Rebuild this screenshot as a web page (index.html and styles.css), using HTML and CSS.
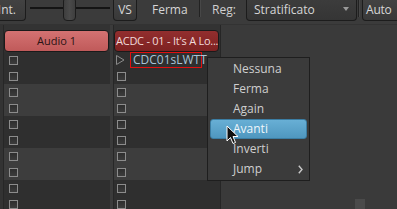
FILE: index.html
```html
<!DOCTYPE html>
<html lang="it">
<head>
    <meta charset="UTF-8">
    <title>Pattern</title>
    <link rel="stylesheet" href="styles.css">
</head>
<body>
    <div class="toolbar">
        <div class="tbtn int">Int.</div>
        <div class="slider">
            <div class="track"></div>
            <div class="handle"></div>
        </div>
        <div class="tbtn vs">VS</div>
        <div class="label ferma">Ferma</div>
        <div class="sep"></div>
        <div class="label reg">Reg:</div>
        <div class="combo">Stratificato<span class="arrow"></span></div>
        <div class="sep"></div>
        <div class="tbtn auto">Auto</div>
    </div>

    <div class="main">
        <div class="column col-a">
            <div class="col-head"><div class="track-btn audio">Audio 1</div></div>
            <div class="rows" id="rows-a"></div>
        </div>
        <div class="col-gap"></div>
        <div class="column col-b">
            <div class="col-head"><div class="track-btn clip">ACDC - 01 - It's A Lo...</div></div>
            <div class="rows" id="rows-b">
                <div class="row dark">
                    <svg class="play" width="9" height="10" viewBox="0 0 9 10"><polygon points="0.5,0.5 8,5 0.5,9.5" fill="none" stroke="#8a8a8a" stroke-width="1"/></svg>
                    <span class="cell-sel">CDC01sLWTT</span>
                </div>
            </div>
        </div>
        <div class="rest">
            <div class="corner"></div>
        </div>
    </div>

    <div class="menu">
        <div class="item">Nessuna</div>
        <div class="item">Ferma</div>
        <div class="item">Again</div>
        <div class="item active">Avanti</div>
        <div class="item">Inverti</div>
        <div class="item">Jump
            <svg class="sub" width="5" height="9" viewBox="0 0 5 9"><path d="M0.8 0.8 L4 4.5 L0.8 8.2" fill="none" stroke="#c8c8c8" stroke-width="1.4"/></svg>
        </div>
    </div>

    <svg class="cursor" width="13" height="20" viewBox="0 0 13 20">
        <path d="M1 1 L1 16 L4.5 12.5 L7 18.5 L9.5 17.5 L7 11.5 L12 11.5 Z" fill="#111" stroke="#fff" stroke-width="1" stroke-linejoin="round"/>
    </svg>

    <script>
        // 10 rows per column, shading switches every 2 rows
        function fillRows(id, start) {
            const box = document.getElementById(id);
            for (let i = start; i < 10; i++) {
                const row = document.createElement('div');
                row.className = 'row ' + (Math.floor(i / 2) % 2 ? 'light' : 'dark');
                row.innerHTML = '<span class="check"></span>';
                box.appendChild(row);
            }
        }
        fillRows('rows-a', 0);
        fillRows('rows-b', 1);
    </script>
</body>
</html>
```

FILE: styles.css
```css
body {
    margin: 0;
    width: 397px;
    height: 209px;
    overflow: hidden;
    background-color: #3a3a3a;
    font-family: "Open Sans", "Noto Sans", sans-serif;
    color: #d6d6d6;
    position: relative;
}
.toolbar {
    height: 24px;
    display: flex;
    align-items: flex-start;
    background-color: #3b3b3b;
    border-bottom: 1px solid #333;
}
.toolbar > * {
    flex-shrink: 0;
}
.tbtn {
    height: 21px;
    box-sizing: border-box;
    border: 1px solid #1c1c1c;
    border-top: none;
    border-radius: 0 0 4px 4px;
    background: linear-gradient(#424242, #393939);
    font-size: 12px;
    line-height: 19px;
    padding: 0 5px;
}
.int {
    width: 40px;
    margin-left: -14px;
    padding-right: 9px;
    text-align: right;
}
.slider {
    position: relative;
    width: 80px;
    height: 21px;
    margin-left: 4px;
}
.track {
    position: absolute;
    left: 0;
    right: 0;
    top: 7px;
    height: 2px;
    background-color: #141414;
}
.handle {
    position: absolute;
    left: 33px;
    top: -3px;
    width: 13px;
    height: 24px;
    box-sizing: border-box;
    border: 1px solid #1c1c1c;
    border-radius: 4px;
    background: linear-gradient(90deg, #3e3e3e, #4a4a4a, #3e3e3e);
}
.vs {
    margin-left: 3px;
    width: 24px;
    padding: 0;
    text-align: center;
}
.label {
    font-size: 12px;
    line-height: 19px;
}
.ferma {
    margin-left: 15px;
    width: 47px;
}
.sep {
    width: 1px;
    height: 17px;
    background-color: #222;
    border-right: 1px solid #474747;
}
.reg {
    margin-left: 11px;
    width: 34px;
    color: #cfcfcf;
}
.combo {
    position: relative;
    width: 111px;
    height: 21px;
    box-sizing: border-box;
    border: 1px solid #1c1c1c;
    border-top: none;
    border-radius: 0 0 4px 4px;
    background: linear-gradient(#3c3c3c, #353535);
    font-size: 12px;
    line-height: 19px;
    padding-left: 7px;
    margin-right: 1px;
}
.arrow {
    position: absolute;
    right: 7px;
    top: 7px;
    border-left: 3px solid transparent;
    border-right: 3px solid transparent;
    border-top: 4px solid #9a9a9a;
}
.auto {
    margin-left: 2px;
    width: 40px;
    padding-left: 3px;
    letter-spacing: -0.2px;
}
.main {
    display: flex;
    height: 184px;
    padding-left: 3px;
    background-color: #333;
}
.column {
    display: flex;
    flex-direction: column;
    border-left: 1px solid #272727;
}
.col-a {
    width: 106px;
}
.col-b {
    width: 106px;
}
.col-gap {
    width: 3px;
    background-color: #3b3b3b;
}
.col-head {
    height: 27px;
    padding: 5px 1px 0 0;
    box-sizing: border-box;
    background-color: #333;
}
.track-btn {
    height: 22px;
    box-sizing: border-box;
    border: 1px solid #1a1a1a;
    border-radius: 4px;
    font-size: 11px;
    line-height: 20px;
    white-space: nowrap;
    overflow: hidden;
}
.audio {
    background: linear-gradient(#d47272, #c05a5a);
    color: #2a1414;
    text-align: center;
}
.clip {
    background: linear-gradient(#922e2e, #7e2222);
    color: #f0dada;
    padding-left: 1px;
    letter-spacing: -0.25px;
}
.row {
    height: 16px;
    display: flex;
    align-items: center;
}
.row.dark {
    background-color: #2f2f2f;
}
.row.light {
    background-color: #3d3d3d;
}
.check {
    width: 9px;
    height: 9px;
    box-sizing: border-box;
    border: 1px solid #8c8c8c;
    background: linear-gradient(#2e2e2e, #3c3c3c);
}
.col-a .check {
    margin-left: 5px;
}
.col-b .check {
    margin-left: 3px;
}
.play {
    margin-left: 2px;
}
.cell-sel {
    margin-left: 5px;
    height: 16px;
    width: 72px;
    box-sizing: border-box;
    border: 1px solid #e01010;
    font-size: 12px;
    line-height: 14px;
    padding-left: 2px;
    color: #a9c4d8;
}
.rest {
    flex: 1;
    position: relative;
    border-left: 1px solid #262626;
    background-color: #3a3a3a;
}
.corner {
    position: absolute;
    left: 134px;
    top: 174px;
    width: 10px;
    height: 10px;
    background-color: #4a4a4a;
}
.menu {
    position: absolute;
    left: 207px;
    top: 57px;
    width: 103px;
    box-sizing: border-box;
    padding: 1px 2px 1px 2px;
    border: 1px solid #1e1e1e;
    background-color: #3b3b3b;
    font-size: 12px;
}
.item {
    position: relative;
    height: 20px;
    line-height: 20px;
    padding-left: 23px;
    color: #cfcfcf;
}
.item.active {
    height: 18px;
    line-height: 18px;
    border: 1px solid #3b7da3;
    margin: 0;
    padding-left: 22px;
    border-radius: 3px;
    background: linear-gradient(#68afd5, #4f97bf);
    color: #eef6fb;
}
.sub {
    position: absolute;
    right: 4px;
    top: 6px;
}
.cursor {
    position: absolute;
    left: 226px;
    top: 125px;
}
```
